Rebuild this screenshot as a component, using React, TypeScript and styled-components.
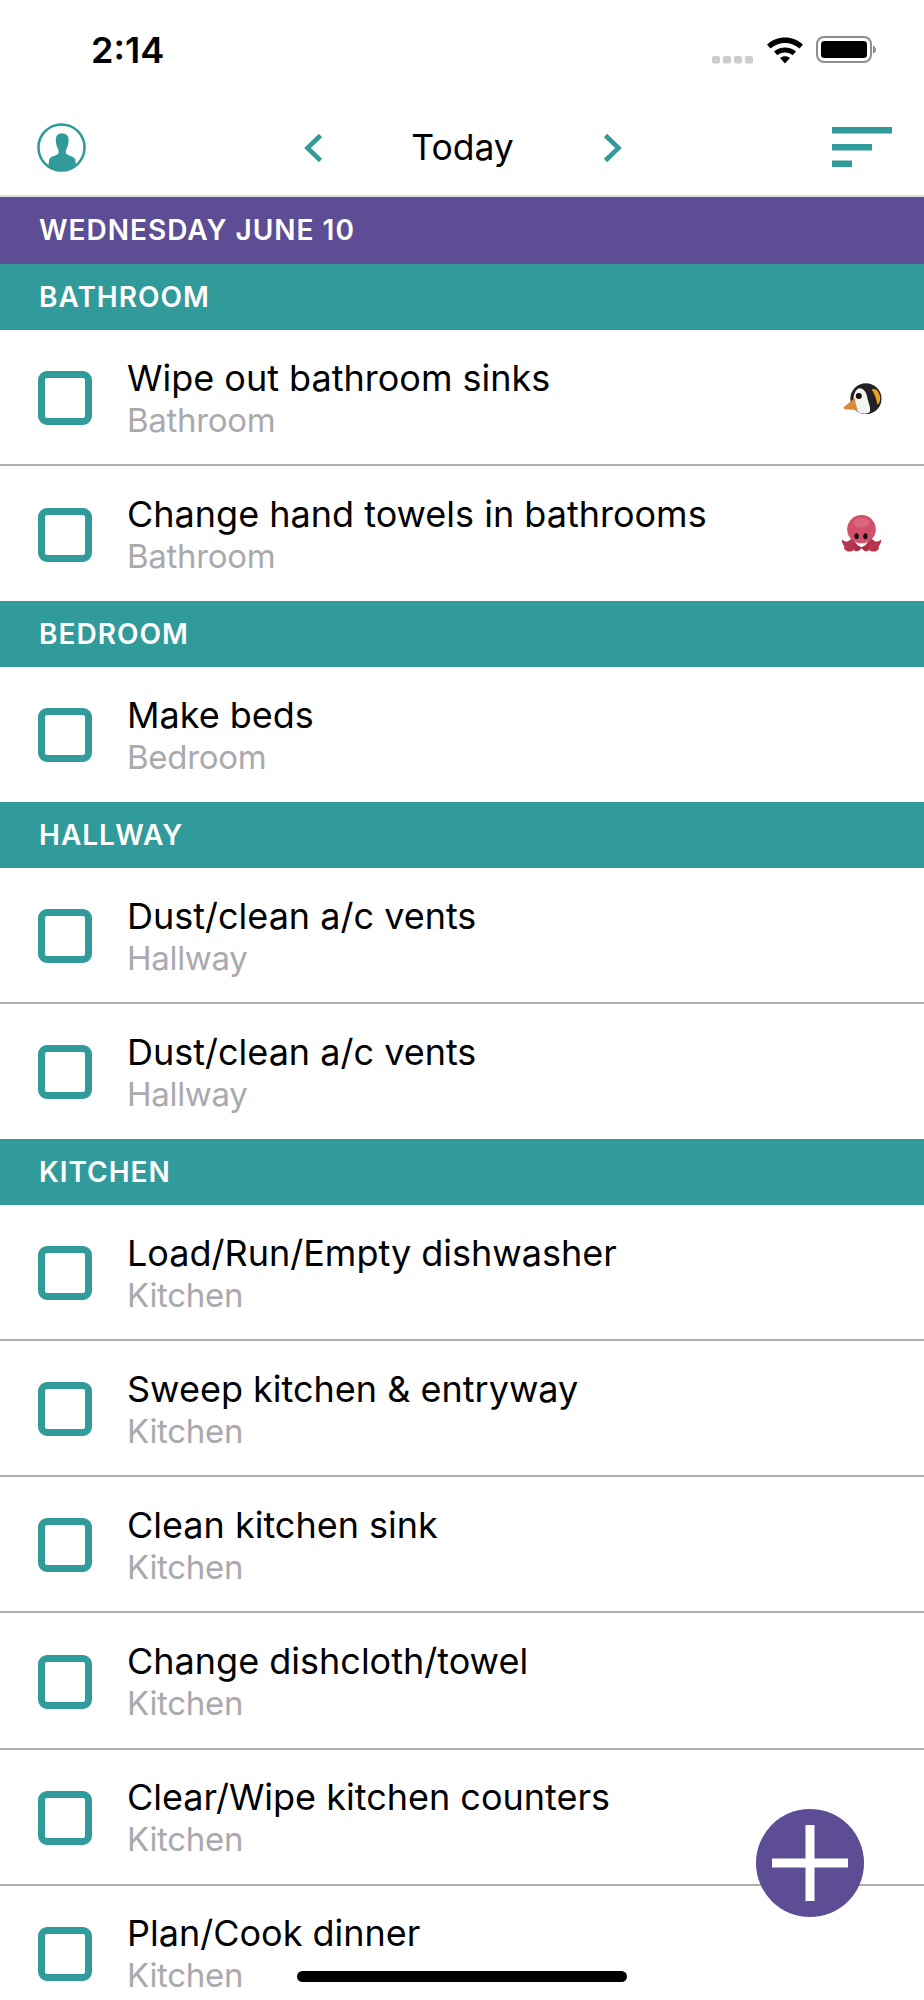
import React from 'react';
import styled, { createGlobalStyle } from 'styled-components';

const TEAL = '#319a9a';
const PURPLE = '#5c4d94';

const GlobalStyle = createGlobalStyle`
  html, body {
    margin: 0;
    padding: 0;
    background: #fff;
    font-family: Inter, "Liberation Sans", sans-serif;
  }
`;

const Screen = styled.div`
  position: relative;
  width: 924px;
  height: 2000px;
  overflow: hidden;
  background: #fff;
`;

const StatusBar = styled.div`
  height: 100px;
  display: flex;
  justify-content: space-between;
  align-items: flex-start;
  padding: 30px 48px 0 91px;
  box-sizing: border-box;
`;

const Clock = styled.span`
  font-size: 36px;
  line-height: 40px;
  font-weight: 600;
  color: #000;
`;

const StatusIcons = styled.div`
  display: flex;
  align-items: flex-start;
  padding-top: 6px;
`;

const NavBar = styled.div`
  height: 95px;
  padding: 0 32px 0 37px;
  display: flex;
  align-items: center;
  justify-content: space-between;
  border-bottom: 2px solid #dcdcdc;
  box-sizing: content-box;
`;

const DayPicker = styled.div`
  display: flex;
  align-items: center;
  margin-left: 7px;
`;

const DayLabel = styled.span`
  width: 280px;
  text-align: center;
  font-size: 35.5px;
  color: #000;
`;

const Band = styled.div<{ $tone: 'day' | 'room' }>`
  height: 66.7px;
  padding-left: 39px;
  display: flex;
  align-items: center;
  background: ${p => (p.$tone === 'day' ? PURPLE : TEAL)};
  color: #fff;
  font-size: 28px;
  font-weight: 600;
  letter-spacing: 1px;
`;

const Row = styled.div<{ $last: boolean }>`
  height: ${p => (p.$last ? '134.2px' : '136.1px')};
  box-sizing: border-box;
  padding: 2px 42px 0 38px;
  display: flex;
  align-items: center;
  gap: 35px;
  background: #fff;
  border-bottom: ${p => (p.$last ? 'none' : '2px solid #aeaeb2')};
`;

const CheckBox = styled.div`
  width: 54px;
  height: 54px;
  flex: none;
  box-sizing: border-box;
  border: 7px solid ${TEAL};
  border-radius: 9px;
`;

const RowText = styled.div`
  flex: 1;
  min-width: 0;
  padding-top: 1px;
`;

const Title = styled.div`
  font-size: 36px;
  line-height: 42px;
  color: #000;
`;

const Subtitle = styled.div`
  font-size: 33px;
  line-height: 42px;
  color: #a9a9ae;
  letter-spacing: -0.3px;
`;

const Fab = styled.div`
  position: absolute;
  left: 756px;
  top: 1809px;
  width: 108px;
  height: 108px;
  border-radius: 50%;
  background: ${PURPLE};
  display: flex;
  align-items: center;
  justify-content: center;
`;

const HomeBar = styled.div`
  position: absolute;
  left: 297px;
  top: 1971px;
  width: 330px;
  height: 11px;
  border-radius: 6px;
  background: #000;
`;

const Signal = () => (
  <svg width="42" height="28" viewBox="0 0 42 28" style={{ marginRight: 12 }}>
    {[0, 11, 22, 33].map(x => (
      <rect key={x} x={x} y="20" width="8" height="7.5" rx="2" fill="#cccccc" />
    ))}
  </svg>
);

const Wifi = () => (
  <svg width="38" height="28" viewBox="0 0 38 28" style={{ marginRight: 12 }}>
    <path d="M1 8.5C11 -1 27 -1 37 8.5L33.5 12.5C25.5 5 12.5 5 4.5 12.5Z" fill="#000" />
    <path d="M8 15.5C14 10 24 10 30 15.5L26.6 19.3C22.5 15.5 15.5 15.5 11.4 19.3Z" fill="#000" />
    <path d="M14 22C17 19.6 21 19.6 24 22L19 27.5Z" fill="#000" />
  </svg>
);

const Battery = () => (
  <svg width="60" height="28" viewBox="0 0 60 28">
    <rect x="1" y="1" width="54" height="25" rx="7" fill="none" stroke="#8e8e8e" strokeWidth="2" />
    <rect x="5" y="5" width="46" height="17" rx="3.5" fill="#000" />
    <path d="M57 9.5C59 10 60 12 60 13.5C60 15 59 17 57 17.5Z" fill="#8e8e8e" />
  </svg>
);

const ProfileIcon = () => (
  <svg width="49" height="49" viewBox="0 0 50 50">
    <defs>
      <clipPath id="profile-clip">
        <circle cx="25" cy="25" r="23.5" />
      </clipPath>
    </defs>
    <circle cx="25" cy="25" r="23.5" fill="none" stroke={TEAL} strokeWidth="2.6" />
    <path
      clipPath="url(#profile-clip)"
      d="M25.5 10.5C21 10.5 19 13.5 19.2 18C19.4 21.5 20.3 25 21.7 27C22.3 28 22.3 30.5 21.5 31.5C20 33.5 14.5 33.5 12.5 37L11 48H40.5L39 37C37 33.5 31.5 33.5 30 31.5C29.2 30.5 29.2 28 29.8 27C31.2 25 32.1 21.5 32.3 18C32.5 13.5 30 10.5 25.5 10.5Z"
      fill={TEAL}
    />
  </svg>
);

const Chevron = ({ flip }: { flip?: boolean }) => (
  <svg width="20" height="30" viewBox="0 0 20 30">
    <path
      d={flip ? 'M2.5 2.5L15.5 15L2.5 27.5' : 'M17.5 2.5L4.5 15L17.5 27.5'}
      fill="none"
      stroke={TEAL}
      strokeWidth="4.6"
    />
  </svg>
);

const SortIcon = () => (
  <svg width="60" height="42" viewBox="0 0 60 42">
    <rect x="0" y="0" width="60" height="6.5" fill={TEAL} />
    <rect x="0" y="17" width="40" height="6.5" fill={TEAL} />
    <rect x="0" y="33.500" width="20" height="6.5" fill={TEAL} />
  </svg>
);

const Penguin = () => (
  <svg width="39" height="31.500" viewBox="0 0 42 34">
    <circle cx="24.700" cy="17" r="16.800" fill="#222222" />
    <path d="M15 7C10 12 10 24 15 30C19 34 27 34 29 31C30 25 27 21 26 15C25 8 19 3 15 7Z" fill="#f4f4f4" />
    <path d="M13 16L1 26C0 27.500 1 28 3 28.500L16 29C14 25 13 20 13 16Z" fill="#d98a3a" />
    <circle cx="17" cy="14" r="3.300" fill="#111111" />
    <path d="M31 7C35 5 39 9 40 15C40.500 19 39 23 37 23C36 17 34 12 31 7Z" fill="#f0a020" />
  </svg>
);

const Octopus = () => (
  <svg width="41" height="39" viewBox="0 0 42 40">
    <path d="M1 25C5 29 9 27 11 23L17 31C14 38 6 40 3 34C5 33 0 29 1 25Z" fill="#b8344f" />
    <path d="M41 25C37 29 33 27 31 23L25 31C28 38 36 40 39 34C37 33 42 29 41 25Z" fill="#b8344f" />
    <path d="M13 29L21 33L29 29L28 37C25 38 23 36 21 34C19 36 17 38 14 37Z" fill="#a92f47" />
    <ellipse cx="21" cy="14.500" rx="14.700" ry="14.500" fill="#d2506a" />
    <ellipse cx="21" cy="8" rx="8" ry="5" fill="#e57e90" opacity="0.5" />
    <ellipse cx="16" cy="21.700" rx="2.200" ry="3" fill="#1a0d12" />
    <ellipse cx="25" cy="21.700" rx="2.200" ry="3" fill="#1a0d12" />
  </svg>
);

type Task = { title: string; room: string; emoji?: 'penguin' | 'octopus' };

const groups: { name: string; tasks: Task[] }[] = [
  {
    name: 'BATHROOM',
    tasks: [
      { title: 'Wipe out bathroom sinks', room: 'Bathroom', emoji: 'penguin' },
      { title: 'Change hand towels in bathrooms', room: 'Bathroom', emoji: 'octopus' },
    ],
  },
  { name: 'BEDROOM', tasks: [{ title: 'Make beds', room: 'Bedroom' }] },
  {
    name: 'HALLWAY',
    tasks: [
      { title: 'Dust/clean a/c vents', room: 'Hallway' },
      { title: 'Dust/clean a/c vents', room: 'Hallway' },
    ],
  },
  {
    name: 'KITCHEN',
    tasks: [
      { title: 'Load/Run/Empty dishwasher', room: 'Kitchen' },
      { title: 'Sweep kitchen & entryway', room: 'Kitchen' },
      { title: 'Clean kitchen sink', room: 'Kitchen' },
      { title: 'Change dishcloth/towel', room: 'Kitchen' },
      { title: 'Clear/Wipe kitchen counters', room: 'Kitchen' },
      { title: 'Plan/Cook dinner', room: 'Kitchen' },
    ],
  },
];

const App: React.FC = () => (
  <Screen>
    <GlobalStyle />
    <StatusBar>
      <Clock>2:14</Clock>
      <StatusIcons>
        <Signal />
        <Wifi />
        <Battery />
      </StatusIcons>
    </StatusBar>
    <NavBar>
      <ProfileIcon />
      <DayPicker>
        <Chevron />
        <DayLabel>Today</DayLabel>
        <Chevron flip />
      </DayPicker>
      <SortIcon />
    </NavBar>
    <Band $tone="day">WEDNESDAY JUNE 10</Band>
    {groups.map(group => (
      <React.Fragment key={group.name}>
        <Band $tone="room">{group.name}</Band>
        {group.tasks.map((task, i) => (
          <Row key={i} $last={i === group.tasks.length - 1 && group.name !== 'KITCHEN'}>
            <CheckBox />
            <RowText>
              <Title>{task.title}</Title>
              <Subtitle>{task.room}</Subtitle>
            </RowText>
            {task.emoji === 'penguin' && <Penguin />}
            {task.emoji === 'octopus' && <Octopus />}
          </Row>
        ))}
      </React.Fragment>
    ))}
    <Fab>
      <svg width="76" height="76" viewBox="0 0 76 76">
        <rect x="33.500" y="0" width="9" height="76" fill="#fff" />
        <rect x="0" y="33.500" width="76" height="9" fill="#fff" />
      </svg>
    </Fab>
    <HomeBar />
  </Screen>
);

export default App;
